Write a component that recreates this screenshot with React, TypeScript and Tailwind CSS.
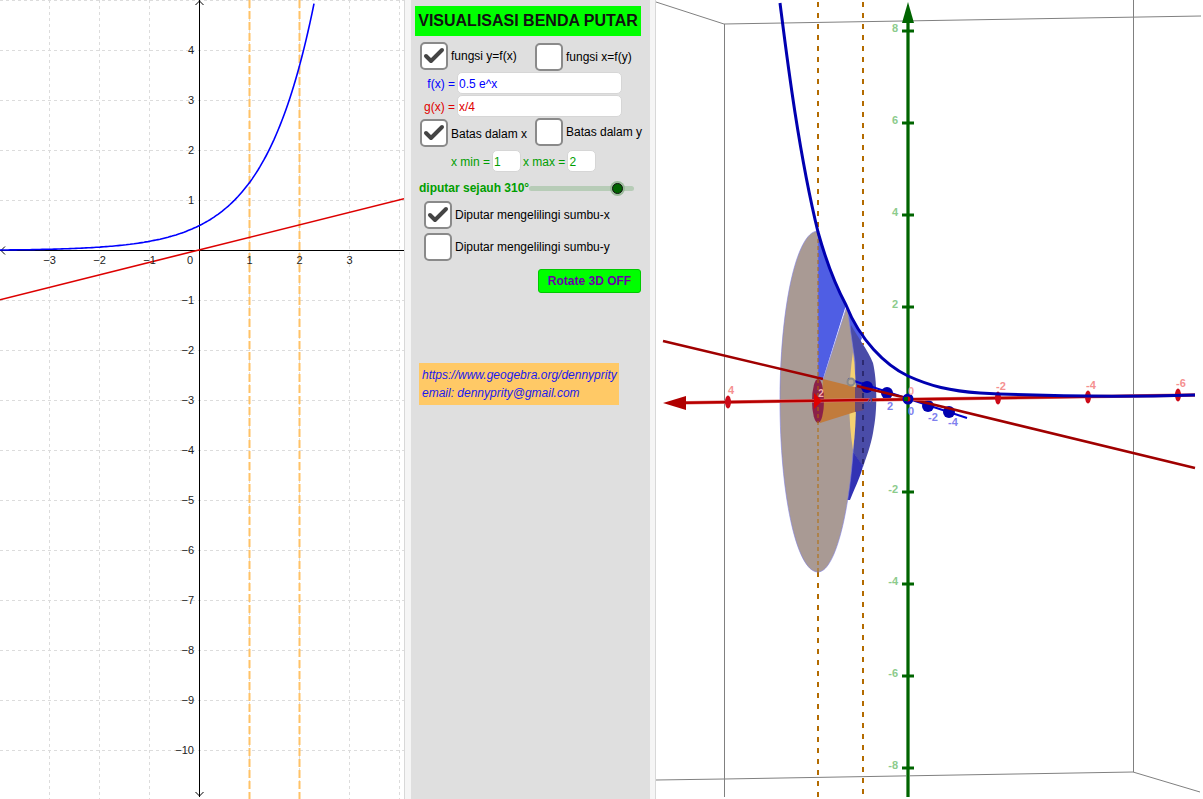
import { Check } from "lucide-react";

const font = { fontFamily: '"Liberation Sans", Arial, sans-serif' };

// graph view: origin at (199,250), 50px per unit
const ox = 199.5;
const oy = 250.5;
const unit = 50;

function expPath() {
  const pts: string[] = [];
  for (let px = 0; px <= 320; px += 2) {
    const x = (px - ox) / unit;
    const y = oy - unit * 0.5 * Math.exp(x);
    if (y < -5) break;
    pts.push(`${px},${y.toFixed(1)}`);
  }
  return "M" + pts.join(" L");
}

function GraphView() {
  const vx = [-3, -2, -1, 1, 2, 3, 4];
  const hy = [4, 3, 2, 1, -1, -2, -3, -4, -5, -6, -7, -8, -9, -10];
  return (
    <svg width="404" height="799" viewBox="0 0 404 799" className="block shrink-0 bg-white" style={font}>
      {vx.map((v) => (
        <line key={v} x1={ox + v * unit} y1={0} x2={ox + v * unit} y2={799} stroke="#dcdcdc" strokeDasharray="3 3" />
      ))}
      {[5, ...hy].map((v) => (
        <line key={v} x1={0} y1={oy - v * unit} x2={404} y2={oy - v * unit} stroke="#dcdcdc" strokeDasharray="3 3" />
      ))}
      <line x1={249.5} y1={0} x2={249.5} y2={799} stroke="#ffc266" strokeWidth="2" strokeDasharray="8 3" />
      <line x1={299.5} y1={0} x2={299.5} y2={799} stroke="#ffc266" strokeWidth="2" strokeDasharray="8 3" />
      <line x1={0} y1={oy} x2={404} y2={oy} stroke="#000" />
      <line x1={ox} y1={0} x2={ox} y2={797} stroke="#000" />
      <path d="M5 246.5 L1 250.5 L5 254.5" fill="none" stroke="#000" />
      <path d="M195.5 5 L199.5 1 L203.5 5" fill="none" stroke="#000" />
      <path d="M195.5 792 L199.5 796 L203.5 792" fill="none" stroke="#000" />
      <path d={expPath()} fill="none" stroke="#0000ff" strokeWidth="1.6" />
      <line x1={0} y1={299.7} x2={404} y2={198.7} stroke="#dd0000" strokeWidth="1.6" />
      {[-3, -2, -1].map((v) => (
        <text key={v} x={ox + v * unit} y={264} fontSize="11" fill="#222" textAnchor="middle">
          {"\u2212" + -v}
        </text>
      ))}
      <text x={190} y={264} fontSize="11" fill="#222" textAnchor="middle">0</text>
      {[1, 2, 3].map((v) => (
        <text key={v} x={ox + v * unit} y={264} fontSize="11" fill="#222" textAnchor="middle">
          {v}
        </text>
      ))}
      {hy.map((v) => (
        <text key={v} x={194} y={oy - v * unit + 3.5} fontSize="11" fill="#222" textAnchor="end">
          {v < 0 ? "\u2212" + -v : v}
        </text>
      ))}
    </svg>
  );
}

function View3D() {
  const greenTicks = [
    { y: 31, t: "8" },
    { y: 123, t: "6" },
    { y: 215, t: "4" },
    { y: 307, t: "2" },
    { y: 492, t: "-2" },
    { y: 584, t: "-4" },
    { y: 676, t: "-6" },
    { y: 768, t: "-8" },
  ];
  const redTicks = [
    { x: 728, y: 402, t: "4" },
    { x: 998, y: 398, t: "-2" },
    { x: 1088, y: 397, t: "-4" },
    { x: 1178, y: 395, t: "-6" },
  ];
  return (
    <svg width="547" height="799" viewBox="656 0 547 799" className="block shrink-0 bg-white" style={font}>
      {/* box */}
      <g stroke="#808080" fill="none">
        <path d="M656 2 L724 24 L1201 16" />
        <path d="M724.5 24 V797" />
        <path d="M1133.5 0 V772" />
        <path d="M656 780 L724 779 L1133 772 L1200 792" />
      </g>

      {/* dashed bounds behind the solid */}
      <line x1={863} y1={2} x2={863} y2={345} stroke="#b36b00" strokeWidth="2" strokeDasharray="5 6" />
      <line x1={863} y1={470} x2={863} y2={797} stroke="#b36b00" strokeWidth="2" strokeDasharray="5 6" />
      <line x1={818} y1={2} x2={818} y2={232} stroke="#b36b00" strokeWidth="2" strokeDasharray="5 6" />
      <line x1={818} y1={572} x2={818} y2={797} stroke="#b36b00" strokeWidth="2" strokeDasharray="5 6" />

      {/* outer blue shell */}
      <path d="M846 305 L862 338 L850 365 Z" fill="#4f5ee4" />
      <path
        d="M851 325 C858 338 868 350 873 363 C877 380 878 410 873 433 C871 445 866 458 863 467 L845 440 L845 360 Z"
        fill="#4a4ca8"
      />
      <path d="M845 440 L863 466 C861 475 857 483 850 500 L845 500 Z" fill="#3232b4" />
      <path d="M818 232 C826 262 836 288 846 305 L823 379 L818 380 Z" fill="#4f5ee4" />

      {/* solid of revolution */}
      <path
        d="M818 231 C796 231 780 310 780 401 C780 492 796 572 818 572 C838 572 855 490 855 400 L855 362 L847 306 L823 380 L818 380 Z"
        fill="#a99a94"
        stroke="#8080e0"
        strokeWidth="0.6"
      />
      <path d="M853 352 C857 385 857 420 853 450 C848 420 848 385 853 352 Z" fill="#f6d272" />
      <path d="M823 379 L855 387 L855 412 L820 423 Z" fill="#c17b3c" />
      <path d="M855 387 L864 388 L864 410 L855 412 Z" fill="#6a4a75" />
      <ellipse cx={818} cy={401} rx={6} ry={22} fill="#8b2148" />

      {/* inner dashes over the solid */}
      <line x1={818} y1={232} x2={818} y2={572} stroke="#b36b00" strokeWidth="1" strokeDasharray="4 3" />
      <line x1={863} y1={360} x2={863} y2={470} stroke="#2c2a70" strokeWidth="2" strokeDasharray="5 6" />

      {/* y axis, blue */}
      <line x1={848} y1={379} x2={967} y2={418} stroke="#0000d0" strokeWidth="2" />
      {[
        [867, 387],
        [887, 393],
        [928, 406],
        [949, 412],
      ].map(([x, y]) => (
        <circle key={x} cx={x} cy={y} r={6} fill="#0000b0" />
      ))}
      <circle cx={851} cy={382} r={3.5} fill="#b5a89a" stroke="#8a8a8a" strokeWidth="2" />

      {/* g rotated, dark red */}
      <line x1={663} y1={341} x2={823} y2={379} stroke="#a00000" strokeWidth="2.6" />
      <line x1={857} y1={386} x2={1195} y2={468} stroke="#a00000" strokeWidth="2.6" />

      {/* z axis, green */}
      <line x1={908} y1={20} x2={908} y2={797} stroke="#7fb57f" strokeWidth="4" />
      <line x1={908} y1={20} x2={908} y2={797} stroke="#006400" strokeWidth="2.5" />
      <path d="M908 2 L902 23 L914 23 Z" fill="#006400" />
      {greenTicks.map((g) => (
        <g key={g.y}>
          <line x1={902} y1={g.y} x2={914} y2={g.y} stroke="#006400" strokeWidth="3" />
          <text x={898} y={g.y + 1} fontSize="11" fontWeight="700" fill="#8ccb8c" textAnchor="end">
            {g.t}
          </text>
        </g>
      ))}

      {/* x axis, red */}
      <line x1={672} y1={403} x2={1195} y2={395} stroke="#e08080" strokeWidth="3.5" />
      <line x1={672} y1={403} x2={1195} y2={395} stroke="#b80000" strokeWidth="2.5" />
      <path d="M663 403 L686 396 L686 410 Z" fill="#b00000" />
      {redTicks.map((r) => (
        <g key={r.x}>
          <ellipse cx={r.x} cy={r.y} rx={3} ry={6.5} fill="#cc0a18" />
          <text x={r.x + 3} y={r.y - 8} fontSize="11" fontWeight="700" fill="#f59090" textAnchor="middle">
            {r.t}
          </text>
        </g>
      ))}
      <path d="M814 393 L822 401 L814 409 Z" fill="#e00000" />
      <text x={821} y={397} fontSize="10" fontWeight="700" fill="#f5b0b0" textAnchor="middle">2</text>

      {/* f rotated, dark blue */}
      <path
        d="M780 3 C786 50 798 150 818 232 C828 268 838 290 846 305 C860 340 885 365 908 376 C930 386 950 391 980 393 C1060 397 1130 397 1195 395"
        fill="none"
        stroke="#0000b0"
        strokeWidth="3"
      />

      <circle cx={908} cy={399} r={5.5} fill="#0000b0" />
      <circle cx={908} cy={399} r={2.5} fill="#d00000" />
      <rect x={904} y={397} width={4} height={4} fill="#006400" />
      <text x={911} y={395} fontSize="11" fontWeight="700" fill="#f5a0a0" textAnchor="middle">0</text>
      <text x={911} y={415} fontSize="11" fontWeight="700" fill="#8080ee" textAnchor="middle">0</text>
      <text x={890} y={410} fontSize="11" fontWeight="700" fill="#8080ee" textAnchor="middle">2</text>
      <text x={870} y={405} fontSize="11" fontWeight="700" fill="#5050a0" textAnchor="middle">4</text>
      <text x={933} y={421} fontSize="11" fontWeight="700" fill="#8080ee" textAnchor="middle">-2</text>
      <text x={953} y={426} fontSize="11" fontWeight="700" fill="#8080ee" textAnchor="middle">-4</text>
    </svg>
  );
}

function CheckBox({ checked }: { checked?: boolean }) {
  return (
    <span className="flex h-[28px] w-[28px] shrink-0 items-center justify-center rounded-[5px] border-2 border-[#8a8a8a] bg-white">
      {checked && <Check size={26} strokeWidth={4} className="text-[#444444]" />}
    </span>
  );
}

function Input({ value, color, width }: { value: string; color: string; width: string }) {
  return (
    <span className={`flex h-[22px] items-center rounded-[5px] border border-[#d6d6d6] bg-white pl-[1px] pt-[2px] text-[12px] ${color} ${width}`}>
      {value}
    </span>
  );
}

function Panel() {
  return (
    <div className="flex h-[799px] w-[239px] shrink-0 flex-col bg-[#dfdfdf] pt-[6px] text-[12px] leading-none text-black" style={font}>
      <div className="mx-[4px] flex h-[30px] w-[226px] items-center justify-center bg-[#00ff00] text-[16px] font-bold text-[#111111]">
        VISUALISASI BENDA PUTAR
      </div>

      <div className="mt-[6px] flex h-[28px] items-center pl-[9px]">
        <CheckBox checked />
        <span className="mb-[1px] ml-[3px] w-[84px]">fungsi y=f(x)</span>
        <span className="mt-[2px] flex items-center">
          <CheckBox />
          <span className="ml-[3px]">fungsi x=f(y)</span>
        </span>
      </div>

      <div className="mt-[2px] flex items-center pl-[11px] text-[#0000ff]">
        <span className="w-[33px] pt-[2px] text-right">f(x) =</span>
        <span className="ml-[2px]">
          <Input value="0.5 e^x" color="text-[#0000ff]" width="w-[165px]" />
        </span>
      </div>
      <div className="mt-[1px] flex items-center pl-[11px] text-[#e00000]">
        <span className="w-[33px] pt-[2px] text-right">g(x) =</span>
        <span className="ml-[2px]">
          <Input value="x/4" color="text-[#e00000]" width="w-[165px]" />
        </span>
      </div>

      <div className="mt-[2px] flex h-[28px] items-center pl-[9px]">
        <CheckBox checked />
        <span className="ml-[3px] w-[84px] pt-[2px]">Batas dalam x</span>
        <span className="-mt-[2px] flex items-center">
          <CheckBox />
          <span className="ml-[3px] whitespace-nowrap">Batas dalam y</span>
        </span>
      </div>

      <div className="mt-[3px] flex items-center pl-[40px] text-[#009e00]">
        <span className="pt-[2px]">x min =</span>
        <span className="ml-[2px]">
          <Input value="1" color="text-[#009e00]" width="w-[29px]" />
        </span>
        <span className="ml-[2px] pt-[2px]">x max =</span>
        <span className="ml-[2px]">
          <Input value="2" color="text-[#009e00]" width="w-[29px]" />
        </span>
      </div>

      <div className="mt-[8px] flex h-[16px] items-center pl-[8px]">
        <span className="whitespace-nowrap font-bold text-[#009e00]">diputar sejauh 310°</span>
        <span className="relative h-[5px] w-[105px] rounded-full bg-[#b7ccb7]">
          <span className="absolute -top-[5px] left-[81px] flex h-[15px] w-[15px] items-center justify-center rounded-full bg-[#9dbb9d]">
            <span className="h-[11px] w-[11px] rounded-full border border-[#111111] bg-[#006400]" />
          </span>
        </span>
      </div>

      <div className="mt-[5px] flex items-center pl-[13px]">
        <CheckBox checked />
        <span className="ml-[3px]">Diputar mengelilingi sumbu-x</span>
      </div>
      <div className="mt-[4px] flex items-center pl-[13px]">
        <CheckBox />
        <span className="ml-[3px]">Diputar mengelilingi sumbu-y</span>
      </div>

      <div className="mt-[8px] flex justify-end pr-[9px]">
        <span className="flex h-[24px] w-[103px] items-center justify-center rounded-[3px] border border-[#00c800] bg-[#00ff00] font-bold text-[#6a00a8]">
          Rotate 3D OFF
        </span>
      </div>

      <div className="ml-[8px] mt-[70px] flex h-[42px] w-[200px] flex-col justify-center gap-[6px] bg-[#ffc966] pl-[3px] italic text-[#1a1aee]">
        <span className="whitespace-nowrap">https://www.geogebra.org/dennyprity</span>
        <span>email: dennyprity@gmail.com</span>
      </div>
    </div>
  );
}

export default function App() {
  return (
    <div className="flex h-[799px] w-[1203px] overflow-hidden bg-white">
      <GraphView />
      <div className="w-[7px] shrink-0 border-l border-[#d8d8d8] bg-[#f5f5f5]" />
      <Panel />
      <div className="w-[6px] shrink-0 border-r border-[#d8d8d8] bg-[#f5f5f5]" />
      <View3D />
    </div>
  );
}
